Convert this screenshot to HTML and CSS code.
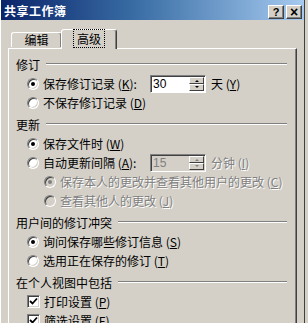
FILE: index.html
```html
<!DOCTYPE html>
<html lang="zh-CN">
<head>
    <meta charset="UTF-8">
    <title>共享工作簿</title>
    <link rel="stylesheet" href="styles.css">
</head>
<body>
    <div class="window">
        <div class="titlebar">
            <span class="title">共享工作簿</span>
            <div class="caption-btns">
                <span class="cbtn">?</span>
                <span class="cbtn close">×</span>
            </div>
        </div>

        <div class="tabs">
            <div class="tab">编辑</div>
            <div class="tab active"><span class="focus">高级</span></div>
        </div>

        <div class="panel">
            <div class="group-title"><span>修订</span><i></i></div>
            <div class="row">
                <span class="radio on"></span>
                <span class="label wide">保存修订记录 (<u>K</u>):</span>
                <span class="spin"><span class="spin-val">30</span><span class="spin-btns"><b class="up"></b><b class="down"></b></span></span>
                <span class="unit">天 (<u>Y</u>)</span>
            </div>
            <div class="row">
                <span class="radio"></span>
                <span class="label">不保存修订记录 (<u>D</u>)</span>
            </div>

            <div class="group-title"><span>更新</span><i></i></div>
            <div class="row">
                <span class="radio on"></span>
                <span class="label">保存文件时 (<u>W</u>)</span>
            </div>
            <div class="row">
                <span class="radio"></span>
                <span class="label wide">自动更新间隔 (<u>A</u>):</span>
                <span class="spin disabled"><span class="spin-val">15</span><span class="spin-btns"><b class="up"></b><b class="down"></b></span></span>
                <span class="unit gray">分钟 (<u>I</u>)</span>
            </div>
            <div class="row sub">
                <span class="radio on disabled"></span>
                <span class="label gray">保存本人的更改并查看其他用户的更改 (<u>C</u>)</span>
            </div>
            <div class="row sub">
                <span class="radio disabled"></span>
                <span class="label gray">查看其他人的更改 (<u>J</u>)</span>
            </div>

            <div class="group-title"><span>用户间的修订冲突</span><i></i></div>
            <div class="row">
                <span class="radio on"></span>
                <span class="label">询问保存哪些修订信息 (<u>S</u>)</span>
            </div>
            <div class="row">
                <span class="radio"></span>
                <span class="label">选用正在保存的修订 (<u>T</u>)</span>
            </div>

            <div class="group-title"><span>在个人视图中包括</span><i></i></div>
            <div class="row">
                <span class="check"><svg width="9" height="9" viewBox="0 0 9 9"><path d="M1 4 L3.5 6.5 L8 1.5" fill="none" stroke="#000" stroke-width="1.8"/></svg></span>
                <span class="label">打印设置 (<u>P</u>)</span>
            </div>
            <div class="row">
                <span class="check"><svg width="9" height="9" viewBox="0 0 9 9"><path d="M1 4 L3.5 6.5 L8 1.5" fill="none" stroke="#000" stroke-width="1.8"/></svg></span>
                <span class="label">筛选设置 (<u>F</u>)</span>
            </div>
        </div>
    </div>
</body>
</html>
```

FILE: styles.css
```css
html, body { margin: 0; padding: 0; }
body { width: 308px; height: 323px; overflow: hidden; background: #d4d0c8; font-family: "Noto Sans CJK SC", "Liberation Sans", sans-serif; font-size: 12px; color: #000; }
u { text-decoration: underline; }

.window { width: 305px; height: 340px; border-right: 1px solid #404040; border-left: 1px solid #fff; box-sizing: border-box; }

.titlebar { height: 20px; display: flex; align-items: center; justify-content: space-between; background: linear-gradient(to right, #0a246a 0%, #3a6ea5 45%, #a6caf0 100%); padding: 0 2px 0 3px; }
.title { color: #fff; font-weight: bold; font-size: 12px; letter-spacing: 0.5px; }
.caption-btns { display: flex; gap: 2px; padding-top: 4px; }
.cbtn { width: 14px; height: 12px; background: #d4d0c8; border: 1px solid; border-color: #fff #404040 #404040 #fff; box-shadow: inset -1px -1px #808080; font: bold 11px "Liberation Sans", sans-serif; line-height: 12px; text-align: center; }
.cbtn.close { font-size: 14px; }

.tabs { display: flex; align-items: flex-end; height: 28px; margin-left: 10px; position: relative; z-index: 1; }
.tab { height: 14px; width: 49px; text-align: center; line-height: 14px; border: 1px solid; border-bottom: none; border-color: #fff #404040 transparent #fff; border-radius: 3px 3px 0 0; box-shadow: inset -1px 0 #808080; margin-bottom: 1px; }
.tab.active { height: 19px; width: 54px; margin-left: -1px; margin-bottom: -1px; background: #d4d0c8; line-height: 18px; }
.focus { outline: 1px dotted #000; padding: 0 3px; }

.panel { margin-left: 7px; width: 289px; box-sizing: border-box; border-top: 1px solid #fff; border-left: 1px solid #fff; border-right: 1px solid #404040; box-shadow: inset -1px 0 #808080; padding: 5px 9px 0 7px; }

.group-title { display: flex; align-items: center; height: 20px; margin-top: 2px; }
.group-title:first-child { margin-top: 0; }
.group-title i { flex: 1; margin-left: 6px; border-top: 1px solid #808080; border-bottom: 1px solid #fff; height: 0; }

.row { display: flex; align-items: center; height: 19px; padding-left: 11px; }
.row.sub { padding-left: 28px; }
.label { margin-left: 4px; white-space: nowrap; }
.label.wide { width: 107px; }
.gray { color: #808080; text-shadow: 1px 1px 0 #fff; }

.radio { width: 12px; height: 12px; box-sizing: border-box; border-radius: 50%; border: 1px solid; border-color: #808080 #fff #fff #808080; box-shadow: inset 1px 1px #404040, inset -1px -1px #d4d0c8; background: #fff; position: relative; flex: none; }
.radio.on::after { content: ""; position: absolute; left: 3px; top: 3px; width: 4px; height: 4px; border-radius: 50%; background: #000; }
.radio.disabled { background: #d4d0c8; }
.radio.disabled.on::after { background: #808080; }

.check { width: 13px; height: 13px; box-sizing: border-box; border: 1px solid; border-color: #808080 #fff #fff #808080; box-shadow: inset 1px 1px #404040, inset -1px -1px #d4d0c8; background: #fff; display: flex; align-items: center; justify-content: center; flex: none; }

.spin { display: flex; width: 56px; height: 18px; box-sizing: border-box; border: 1px solid; border-color: #808080 #fff #fff #808080; box-shadow: inset 1px 1px #404040; background: #fff; padding: 1px 1px 1px 2px; }
.spin.disabled { background: #d4d0c8; color: #808080; }
.spin-val { flex: 1; line-height: 15px; font-family: "Liberation Sans", sans-serif; font-size: 12px; }
.spin-btns { display: flex; flex-direction: column; width: 15px; }
.spin-btns b { flex: 1; background: #d4d0c8; border: 1px solid; border-color: #fff #404040 #404040 #fff; position: relative; }
.spin-btns b::after { content: ""; position: absolute; left: 5px; top: 2px; border-left: 2px solid transparent; border-right: 2px solid transparent; }
.spin-btns .up::after { border-bottom: 2px solid #000; }
.spin-btns .down::after { border-top: 2px solid #000; top: 1px; }
.spin.disabled .spin-btns .up::after { border-bottom-color: #808080; }
.spin.disabled .spin-btns .down::after { border-top-color: #808080; }
.unit { margin-left: 5px; white-space: nowrap; }
```
